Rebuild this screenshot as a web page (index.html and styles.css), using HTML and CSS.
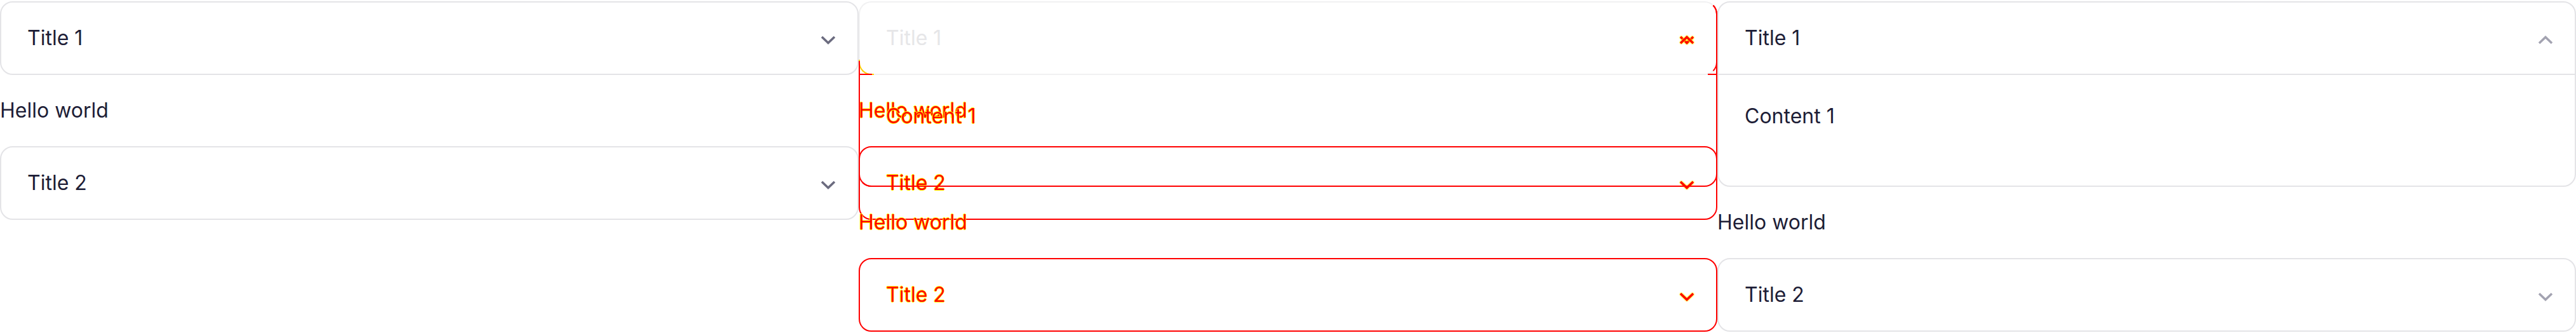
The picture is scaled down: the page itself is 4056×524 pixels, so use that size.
FILE: index.html
```html
<!DOCTYPE html>
<html lang="en">
<head>
<meta charset="utf-8">
<title>Accordion visual diff</title>
<link rel="stylesheet" href="styles.css">
</head>
<body>
<main class="page">
  <!-- expected -->
  <section class="col expected">
    <div class="item">
      <div class="head"><span class="title">Title 1</span><svg class="chev" viewBox="0 0 26 14"><polyline points="3,2 13,11.5 23,2"/></svg></div>
    </div>
    <p class="hello">Hello world</p>
    <div class="item">
      <div class="head"><span class="title">Title 2</span><svg class="chev" viewBox="0 0 26 14"><polyline points="3,2 13,11.5 23,2"/></svg></div>
    </div>
  </section>

  <!-- diff -->
  <section class="col diff">
    <div class="layer ghost">
      <div class="item first">
        <div class="head"><span class="title">Title 1</span></div>
      </div>
    </div>
    <div class="layer red exp">
      <div class="item first">
        <div class="head"><span class="title">Title 1</span><svg class="chev" viewBox="0 0 26 14"><polyline points="3,2 13,11.5 23,2"/></svg></div>
      </div>
      <p class="hello">Hello world</p>
      <div class="item">
        <div class="head"><span class="title">Title 2</span><svg class="chev" viewBox="0 0 26 14"><polyline points="3,2 13,11.5 23,2"/></svg></div>
      </div>
    </div>
    <div class="layer red act">
      <div class="item open">
        <div class="head"><span class="title">Title 1</span><svg class="chev" viewBox="0 0 26 14"><polyline points="3,12 13,2.5 23,12"/></svg></div>
        <div class="body">Content 1</div>
      </div>
      <p class="hello">Hello world</p>
      <div class="item">
        <div class="head"><span class="title">Title 2</span><svg class="chev" viewBox="0 0 26 14"><polyline points="3,2 13,11.5 23,2"/></svg></div>
      </div>
    </div>
  </section>

  <!-- actual -->
  <section class="col actual">
    <div class="item open">
      <div class="head"><span class="title">Title 1</span><svg class="chev" viewBox="0 0 26 14"><polyline points="3,12 13,2.5 23,12"/></svg></div>
      <div class="body">Content 1</div>
    </div>
    <p class="hello">Hello world</p>
    <div class="item">
      <div class="head"><span class="title">Title 2</span><svg class="chev" viewBox="0 0 26 14"><polyline points="3,2 13,11.5 23,2"/></svg></div>
    </div>
  </section>
</main>
</body>
</html>
```

FILE: styles.css
```css
* { box-sizing: border-box; }

body {
  margin: 0;
  background: #ffffff;
  font-family: Inter, "Noto Sans", "Liberation Sans", sans-serif;
  color: #1d1d36;
}

.page {
  display: grid;
  grid-template-columns: repeat(3, 1352px);
  width: 4056px;
  height: 524px;
  overflow: hidden;
}

.col {
  position: relative;
  padding-top: 2px;
}

.item {
  border: 2px solid #e4e4e7;
  border-radius: 20px;
  background: transparent;
}

.head {
  height: 112px;
  display: flex;
  align-items: center;
  justify-content: space-between;
  padding: 0 33px 0 41px;
  font-size: 32px;
  line-height: 48px;
}

.chev {
  width: 26px;
  height: 14px;
  margin-top: 6px;
  fill: none;
  stroke: #6b6b7f;
  stroke-width: 3.6;
  stroke-linejoin: miter;
}

.actual .chev { stroke: #a3a3b1; }

.body {
  border-top: 2px solid #e4e4e7;
  height: 176px;
  padding: 41px 41px 0;
  font-size: 32px;
  line-height: 48px;
}

.hello {
  margin: 32px 0;
  font-size: 32px;
  line-height: 48px;
}

/* ---------- diff column ---------- */
.layer {
  position: absolute;
  inset: 0;
  padding-top: 2px;
}

.ghost .item {
  border-color: #f1f1f2 transparent #f1f1f2 #f1f1f2;
}
.ghost .title { color: #e6e6e8; }

.red .item { border-color: #ff0000; }
.red .title,
.red .hello,
.red .body {
  color: #ff0000;
  text-shadow: 0.8px 0 0 #ffff00, -0.8px 0 0 #ffff00, 0 0.8px 0 #ffff00, 0 -0.8px 0 #ffff00;
}
.red .chev {
  stroke: #ff0000;
  filter: drop-shadow(0 0 1px #ffff00) drop-shadow(0 0 0.5px #ffff00);
}

/* expected card 1: only the right edge and the rounded lower-left corner differ */
.exp .item.first {
  position: relative;
  border-color: transparent #ff0000 transparent transparent;
}
.exp .item.first .title { visibility: hidden; }
.exp .item.first::after {
  content: "";
  position: absolute;
  left: -2px;
  bottom: -2px;
  width: 22px;
  height: 22px;
  border-left: 2px solid #ffd000;
  border-bottom: 2px solid #ffd000;
  border-bottom-left-radius: 20px;
}

/* actual card 1: header matches, the rest differs */
.act .item.open {
  position: relative;
  border-top-color: transparent;
  border-left-color: transparent;
}
.act .item.open .title { visibility: hidden; }
.act .item.open::before {
  content: "";
  position: absolute;
  left: -2px;
  top: 92px;
  bottom: -2px;
  width: 22px;
  border-left: 2px solid #ff0000;
  border-bottom: 2px solid #ff0000;
  border-bottom-left-radius: 20px;
}
.act .body {
  border-top: 2px solid transparent;
  border-image: linear-gradient(90deg, #ff0000 20px, transparent 20px, transparent calc(100% - 14px), #ff0000 calc(100% - 14px)) 1;
}
```
